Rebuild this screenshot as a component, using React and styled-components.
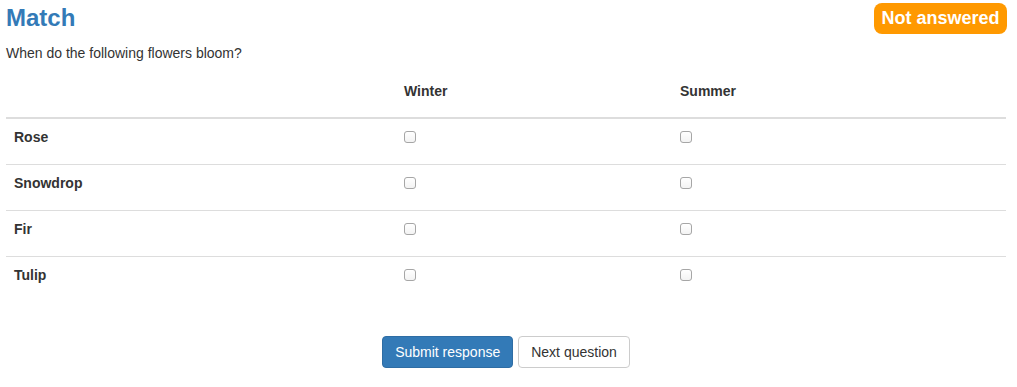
import React from "react";
import styled, { createGlobalStyle } from "styled-components";

const GlobalStyle = createGlobalStyle`
  body {
    margin: 0;
    background: #fff;
    font-family: "Liberation Sans", Arial, Helvetica, sans-serif;
    font-size: 14px;
    line-height: 20px;
    color: #333;
  }
  * { box-sizing: border-box; }
`;

const Page = styled.div`
  width: 1000px;
  margin-left: 6px;
  padding-top: 3px;
`;

const TitleRow = styled.div`
  display: flex;
  justify-content: space-between;
  align-items: flex-start;
`;

const Title = styled.h3`
  margin: 0;
  font-size: 24px;
  line-height: 30px;
  font-weight: bold;
  color: #337ab7;
`;

const Badge = styled.span`
  margin-right: -1px;
  width: 133px;
  height: 31px;
  border-radius: 8px;
  background: #ff9900;
  color: #fff;
  text-align: center;
  font-size: 18px;
  font-weight: bold;
  line-height: 31px;
`;

const Question = styled.p`
  margin: 9px 0 10px;
`;

const Table = styled.table`
  width: 1000px;
  border-collapse: collapse;
  table-layout: fixed;
`;

const Th = styled.th`
  padding: 8px 8px 16px;
  text-align: left;
  font-weight: bold;
  border-bottom: 2px solid #ddd;
`;

const Td = styled.td`
  padding: 8px 8px 17px;
  border-top: ${(p) => (p.$first ? "none" : "1px solid #ddd")};
  font-weight: ${(p) => (p.$label ? "bold" : "normal")};
  vertical-align: top;
`;

const Check = styled.input.attrs({ type: "checkbox" })`
  appearance: none;
  display: block;
  width: 12px;
  height: 12px;
  margin: 4px 0 0;
  border: 1px solid #a6a6a6;
  border-radius: 3px;
  background: linear-gradient(#fff, #f3f3f3);
`;

const Actions = styled.div`
  display: flex;
  justify-content: center;
  gap: 5px;
  margin-top: 34px;
`;

const Button = styled.button`
  padding: 6px 12px;
  font-family: inherit;
  font-size: 14px;
  line-height: 18px;
  border-radius: 4px;
  border: 1px solid ${(p) => (p.$primary ? "#2e6da4" : "#ccc")};
  background: ${(p) => (p.$primary ? "#337ab7" : "#fff")};
  color: ${(p) => (p.$primary ? "#fff" : "#333")};
`;

const flowers = ["Rose", "Snowdrop", "Fir", "Tulip"];

const App = () => {
  return (
    <Page>
      <GlobalStyle />
      <TitleRow>
        <Title>Match</Title>
        <Badge>Not answered</Badge>
      </TitleRow>
      <Question>When do the following flowers bloom?</Question>
      <Table>
        <colgroup>
          <col style={{ width: 390 }} />
          <col style={{ width: 276 }} />
          <col style={{ width: 334 }} />
        </colgroup>
        <thead>
          <tr>
            <Th></Th>
            <Th>Winter</Th>
            <Th>Summer</Th>
          </tr>
        </thead>
        <tbody>
          {flowers.map((f, i) => (
            <tr key={f}>
              <Td $label $first={i === 0}>{f}</Td>
              <Td $first={i === 0}><Check /></Td>
              <Td $first={i === 0}><Check /></Td>
            </tr>
          ))}
        </tbody>
      </Table>
      <Actions>
        <Button $primary>Submit response</Button>
        <Button>Next question</Button>
      </Actions>
    </Page>
  );
};

export default App;
